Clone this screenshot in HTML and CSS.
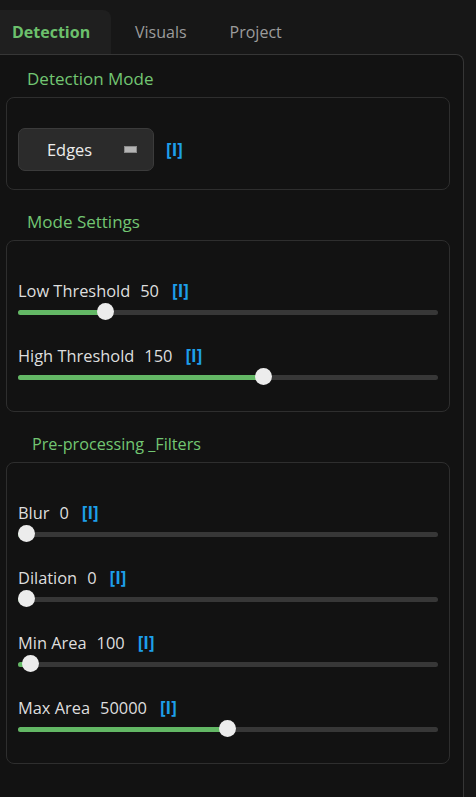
FILE: index.html
```html
<!DOCTYPE html>
<html>
<head>
<meta charset="utf-8">
<link rel="stylesheet" href="styles.css">
</head>
<body>
<div class="app">
  <div class="tabs">
    <div class="tab tab-active">Detection</div>
    <div class="tab">Visuals</div>
    <div class="tab">Project</div>
  </div>
  <div class="panel">
    <div class="group-title">Detection Mode</div>
    <div class="group group-mode">
      <div class="mode-row">
        <div class="combo">
          <span class="combo-text">Edges</span>
          <span class="combo-ind"></span>
        </div>
        <span class="info">[I]</span>
      </div>
    </div>

    <div class="group-title">Mode Settings</div>
    <div class="group group-sliders">
      <div class="row">
        <div class="row-label"><span>Low Threshold</span><span class="val">50</span><span class="info">[I]</span></div>
        <div class="slider"><div class="track"></div><div class="fill" style="width:87px"></div><div class="knob" style="left:79px"></div></div>
      </div>
      <div class="row">
        <div class="row-label"><span>High Threshold</span><span class="val">150</span><span class="info">[I]</span></div>
        <div class="slider"><div class="track"></div><div class="fill" style="width:245px"></div><div class="knob" style="left:237px"></div></div>
      </div>
    </div>

    <div class="group-title group-title-alt">Pre-processing _Filters</div>
    <div class="group group-sliders">
      <div class="row">
        <div class="row-label"><span>Blur</span><span class="val">0</span><span class="info">[I]</span></div>
        <div class="slider"><div class="track"></div><div class="fill" style="width:9px"></div><div class="knob" style="left:0px"></div></div>
      </div>
      <div class="row">
        <div class="row-label"><span>Dilation</span><span class="val">0</span><span class="info">[I]</span></div>
        <div class="slider"><div class="track"></div><div class="fill" style="width:9px"></div><div class="knob" style="left:0px"></div></div>
      </div>
      <div class="row">
        <div class="row-label"><span>Min Area</span><span class="val">100</span><span class="info">[I]</span></div>
        <div class="slider"><div class="track"></div><div class="fill" style="width:13px"></div><div class="knob" style="left:4px"></div></div>
      </div>
      <div class="row">
        <div class="row-label"><span>Max Area</span><span class="val">50000</span><span class="info">[I]</span></div>
        <div class="slider"><div class="track"></div><div class="fill" style="width:210px"></div><div class="knob" style="left:201px"></div></div>
      </div>
    </div>
  </div>
</div>
</body>
</html>
```

FILE: styles.css
```css
html, body {
  margin: 0;
  padding: 0;
  background: #171717;
  height: 100%;
  overflow: hidden;
}

body {
  font-family: "Open Sans", "Noto Sans", sans-serif;
  font-size: 16px;
  color: #dedede;
}

.app {
  padding-top: 10px;
  height: 100%;
  box-sizing: border-box;
  display: flex;
  flex-direction: column;
}

.tabs {
  display: flex;
  height: 44px;
  flex: none;
  align-items: stretch;
}

.tab {
  display: flex;
  align-items: center;
  padding: 0 19px 0 24px;
  color: #9c9c9c;
  font-size: 16px;
}

.tab-active {
  width: 111px;
  box-sizing: border-box;
  padding: 0 0 0 12px;
  background: #1f1f1f;
  color: #6cc06c;
  font-weight: 700;
  border-top-right-radius: 8px;
}

.panel {
  flex: 1;
  width: 464px;
  box-sizing: border-box;
  background: #121212;
  border-top: 1px solid #363636;
  border-right: 1px solid #363636;
  border-top-right-radius: 8px;
  padding: 14px 13px 0 6px;
  overflow: hidden;
}

.group-title {
  height: 20px;
  line-height: 20px;
  font-size: 17px;
  color: #72c672;
  padding-left: 21px;
  margin-bottom: 8px;
}

.group-title-alt {
  padding-left: 26px;
  font-size: 16.2px;
}

.group {
  border: 1px solid #2e2e2e;
  border-radius: 8px;
  margin-bottom: 22px;
}

.group-mode {
  padding: 30px 11px 18px 11px;
}

.mode-row {
  display: flex;
  align-items: center;
}

.combo {
  width: 136px;
  height: 43px;
  box-sizing: border-box;
  background: #2b2b2b;
  border: 1px solid #3b3b3b;
  border-radius: 7px;
  display: flex;
  align-items: center;
  padding-left: 28px;
}

.combo-text {
  color: #ececec;
  font-size: 16.4px;
}

.combo-ind {
  width: 13px;
  height: 7px;
  box-sizing: border-box;
  background: #b4b4b4;
  border: 1px solid #8a8a8a;
  margin-left: auto;
  margin-right: 16px;
}

.mode-row .info {
  margin-left: 12px;
}

.info {
  color: #1d9fe9;
  font-weight: 700;
  font-size: 17px;
}

.group-sliders {
  padding: 40px 11px 25px 11px;
  display: flex;
  flex-direction: column;
  gap: 25px;
}

.row-label {
  display: flex;
  height: 20px;
  line-height: 20px;
  align-items: center;
  font-size: 16.4px;
}

.row-label .val {
  margin-left: 10px;
}

.row-label .info {
  margin-left: 13px;
}

.slider {
  position: relative;
  height: 18px;
  margin-top: 2px;
}

.track {
  position: absolute;
  left: 0;
  right: 0;
  top: 7px;
  height: 5px;
  border-radius: 3px;
  background: #373737;
}

.fill {
  position: absolute;
  left: 0;
  top: 7px;
  height: 5px;
  border-radius: 3px;
  background: #63b865;
}

.knob {
  position: absolute;
  top: 0;
  width: 17px;
  height: 17px;
  border-radius: 50%;
  background: #ececec;
}
```
